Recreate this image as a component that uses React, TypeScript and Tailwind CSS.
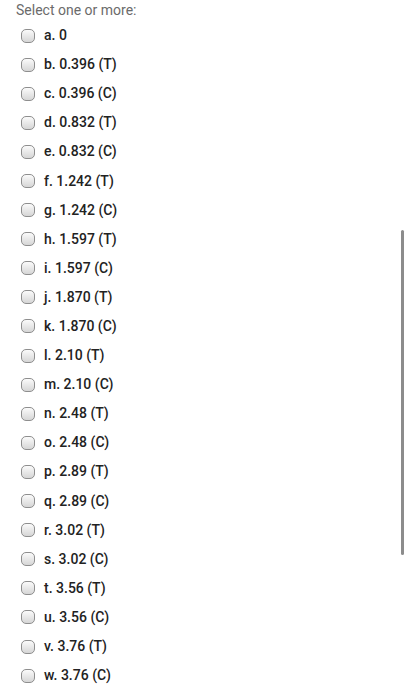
import React from "react";

const options = [
  "a. 0",
  "b. 0.396 (T)",
  "c. 0.396 (C)",
  "d. 0.832 (T)",
  "e. 0.832 (C)",
  "f. 1.242 (T)",
  "g. 1.242 (C)",
  "h. 1.597 (T)",
  "i. 1.597 (C)",
  "j. 1.870 (T)",
  "k. 1.870 (C)",
  "l. 2.10 (T)",
  "m. 2.10 (C)",
  "n. 2.48 (T)",
  "o. 2.48 (C)",
  "p. 2.89 (T)",
  "q. 2.89 (C)",
  "r. 3.02 (T)",
  "s. 3.02 (C)",
  "t. 3.56 (T)",
  "u. 3.56 (C)",
  "v. 3.76 (T)",
  "w. 3.76 (C)",
];

function Box() {
  return (
    <span className="w-[14px] h-[14px] rounded-[5px] border border-[#8e8e8e] bg-gradient-to-b from-[#fbfbfb] to-[#d6d6d6] shrink-0" />
  );
}

export default function App() {
  return (
    <div className="relative w-[407px] h-[700px] bg-white overflow-hidden font-['Roboto',sans-serif]">
      <div className="pl-4 h-[21px] leading-[21px] text-[14px] text-[#6b6b6b]">
        Select one or more:
      </div>
      <ul className="pl-[21px]">
        {options.map((o) => (
          <li key={o} className="h-[29.1px] flex items-center gap-[9px]">
            <Box />
            <span className="text-[14px] font-medium text-[#222]">{o}</span>
          </li>
        ))}
      </ul>
      <div className="absolute left-[401px] top-[230px] w-[3px] h-[325px] rounded-full bg-[#8c8c8c]" />
    </div>
  );
}
